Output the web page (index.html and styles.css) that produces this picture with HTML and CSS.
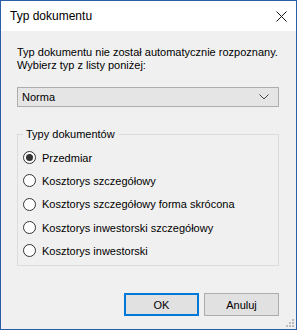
FILE: index.html
```html
<!DOCTYPE HTML>
<html>

<head>
  <meta charset="utf-8">
  <title>Typ dokumentu</title>
  <link rel="stylesheet" href="styles.css">
</head>

<body>
  <div class="window">
    <div class="titlebar">
      <span class="title">Typ dokumentu</span>
      <svg class="close" width="11" height="11" viewBox="0 0 11 11">
        <path d="M0.5 0.5 L10.5 10.5 M10.5 0.5 L0.5 10.5" stroke="#111" stroke-width="1" fill="none" />
      </svg>
    </div>

    <div class="content">
      <p class="prompt">Typ dokumentu nie został automatycznie rozpoznany.<br>Wybierz typ z listy poniżej:</p>

      <div class="combo">
        <span>Norma</span>
        <svg width="10" height="6" viewBox="0 0 10 6">
          <path d="M0.5 0.5 L5 5 L9.5 0.5" stroke="#444" stroke-width="1" fill="none" />
        </svg>
      </div>

      <fieldset class="group">
        <legend>Typy dokumentów</legend>
        <label class="option"><span class="radio checked"></span>Przedmiar</label>
        <label class="option"><span class="radio"></span>Kosztorys szczegółowy</label>
        <label class="option"><span class="radio"></span>Kosztorys szczegółowy forma skrócona</label>
        <label class="option"><span class="radio"></span>Kosztorys inwestorski szczegółowy</label>
        <label class="option"><span class="radio"></span>Kosztorys inwestorski</label>
      </fieldset>

      <div class="buttons">
        <button class="btn default">OK</button>
        <button class="btn">Anuluj</button>
      </div>
    </div>

    <svg class="grip" width="9" height="9" viewBox="0 0 9 9">
      <rect x="7" y="1" width="2" height="2" fill="#bcbcbc" />
      <rect x="4" y="4" width="2" height="2" fill="#bcbcbc" />
      <rect x="7" y="4" width="2" height="2" fill="#bcbcbc" />
      <rect x="1" y="7" width="2" height="2" fill="#bcbcbc" />
      <rect x="4" y="7" width="2" height="2" fill="#bcbcbc" />
      <rect x="7" y="7" width="2" height="2" fill="#bcbcbc" />
    </svg>
  </div>
</body>

</html>
```

FILE: styles.css
```css
* {
  margin: 0;
  padding: 0;
  box-sizing: border-box;
}

body {
  font-family: "Liberation Sans", Arial, sans-serif;
  font-size: 11px;
  color: #000;
  background: #fff;
}

.window {
  width: 297px;
  height: 330px;
  border: 1px solid #2b5ca8;
  background: #f0f0f0;
  position: relative;
}

.titlebar {
  height: 30px;
  background: #fff;
  display: flex;
  align-items: center;
  justify-content: space-between;
  padding: 0 9px 0 9px;
}

.title {
  font-size: 12px;
}

.close {
  margin-top: 1px;
}

.content {
  padding: 14px 17px 0 16px;
}

.prompt {
  line-height: 13px;
  padding-top: 1px;
  white-space: nowrap;
}

.combo {
  margin-top: 15px;
  height: 20px;
  background: #e5e5e5;
  border: 1px solid #adadad;
  display: flex;
  align-items: center;
  justify-content: space-between;
  padding: 0 9px 0 4px;
}

.group {
  margin-top: 20px;
  border: 1px solid #dcdcdc;
  padding: 4px 0 5px 5px;
  height: 139px;
}

.group legend {
  margin-left: 0;
  padding: 0 3px;
  line-height: 15px;
}

.option {
  display: flex;
  align-items: center;
  height: 23.3px;
  white-space: nowrap;
}

.radio {
  width: 13px;
  height: 13px;
  border: 1px solid #333;
  border-radius: 50%;
  background: #fff;
  margin-right: 6px;
  display: flex;
  align-items: center;
  justify-content: center;
}

.radio.checked::after {
  content: "";
  width: 7px;
  height: 7px;
  border-radius: 50%;
  background: #333;
}

.buttons {
  margin-top: 27px;
  display: flex;
  justify-content: flex-end;
  gap: 5px;
}

.btn {
  width: 75px;
  height: 23px;
  font-family: inherit;
  font-size: 11px;
  color: #000;
  background: #e1e1e1;
  border: 1px solid #adadad;
}

.btn.default {
  border: 2px solid #0078d7;
}

.grip {
  position: absolute;
  right: 2px;
  bottom: 2px;
}
```
